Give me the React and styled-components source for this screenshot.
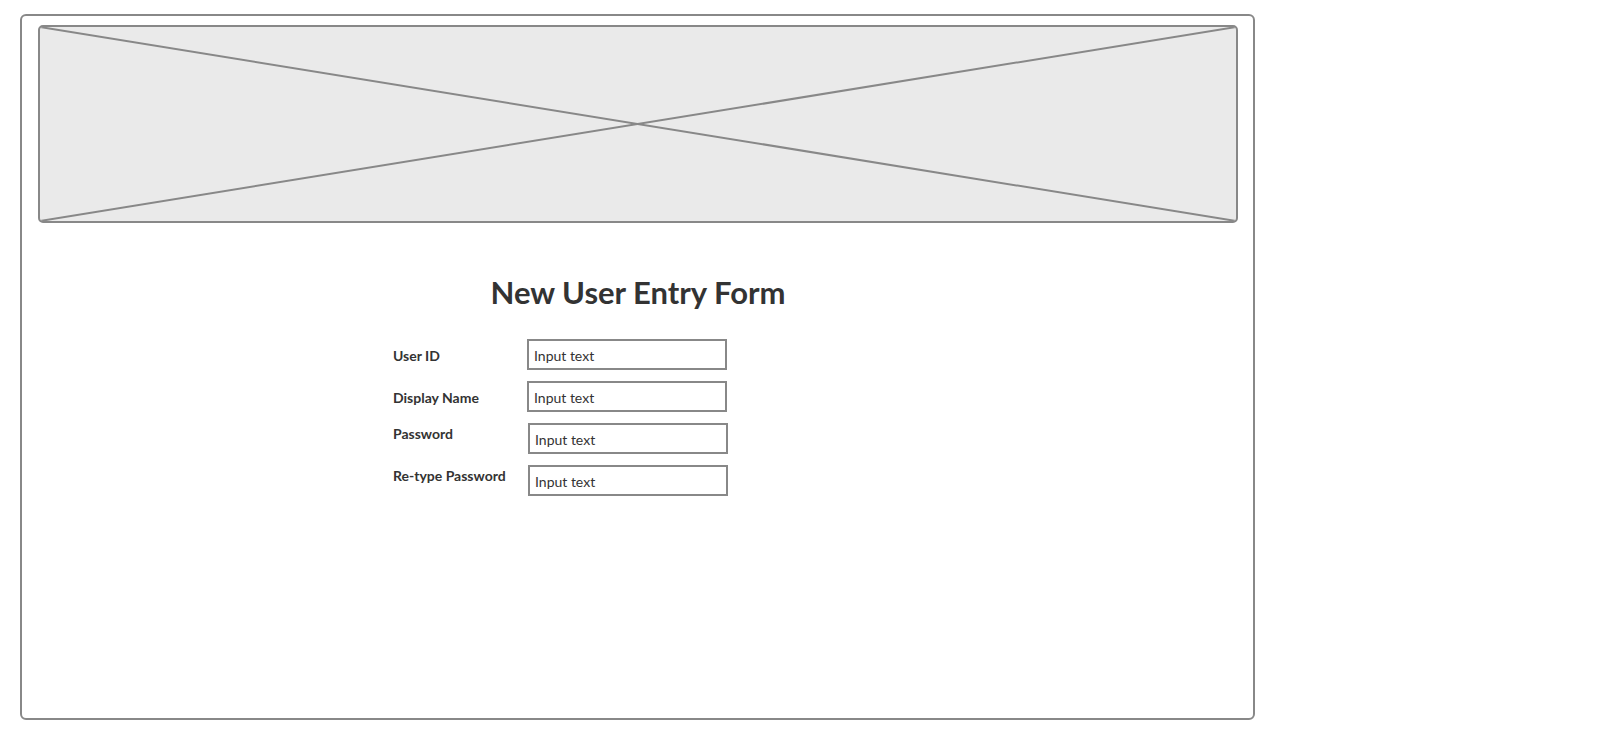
import React from 'react';
import styled, { createGlobalStyle } from 'styled-components';

const GlobalStyle = createGlobalStyle`
  html, body {
    margin: 0;
    padding: 0;
    background: #ffffff;
    font-family: Lato, "Open Sans", "Liberation Sans", sans-serif;
    color: #333333;
  }
`;

const Frame = styled.div`
  box-sizing: border-box;
  width: 1235px;
  height: 706px;
  margin: 14px 0 0 20px;
  padding: 9px 15px 0 16px;
  border: 2px solid #888888;
  border-radius: 6px;
  display: flex;
  flex-direction: column;
`;

const Banner = styled.div`
  box-sizing: border-box;
  height: 198px;
  background: #eaeaea;
  border: 2px solid #888888;
  border-radius: 5px;
  overflow: hidden;

  svg {
    display: block;
    width: 100%;
    height: 100%;
  }
`;

const Title = styled.h1`
  margin: 51px 0 0;
  font-size: 31px;
  line-height: 36px;
  font-weight: 700;
  text-align: center;
  color: #333333;
`;

const Form = styled.div`
  display: flex;
  flex-direction: column;
  gap: 11px;
  margin-top: 29px;
  padding-left: 355px;
`;

const Row = styled.div`
  display: grid;
  grid-template-columns: ${p => (p.$wide ? '135px' : '134px')} 200px;
  height: 31px;
`;

const Label = styled.div`
  align-self: start;
  padding-top: ${p => p.$top}px;
  font-size: 14px;
  font-weight: 700;
  color: #333333;
`;

const InputBox = styled.div`
  box-sizing: border-box;
  width: 200px;
  height: 31px;
  border: 2px solid #888888;
  padding: 6px 0 0 5px;
  font-size: 14px;
  color: #333333;
`;

const fields = [
  { label: 'User ID', top: 8 },
  { label: 'Display Name', top: 8 },
  { label: 'Password', top: 2, wide: true },
  { label: 'Re-type Password', top: 2, wide: true },
];

export default function App() {
  return (
    <>
      <GlobalStyle />
      <Frame>
        <Banner>
          <svg viewBox="0 0 100 100" preserveAspectRatio="none">
            <line x1="0" y1="0" x2="100" y2="100" stroke="#888888" strokeWidth="2" vectorEffect="non-scaling-stroke" />
            <line x1="100" y1="0" x2="0" y2="100" stroke="#888888" strokeWidth="2" vectorEffect="non-scaling-stroke" />
          </svg>
        </Banner>
        <Title>New User Entry Form</Title>
        <Form>
          {fields.map(f => (
            <Row key={f.label} $wide={f.wide}>
              <Label $top={f.top}>{f.label}</Label>
              <InputBox>Input text</InputBox>
            </Row>
          ))}
        </Form>
      </Frame>
    </>
  );
}
